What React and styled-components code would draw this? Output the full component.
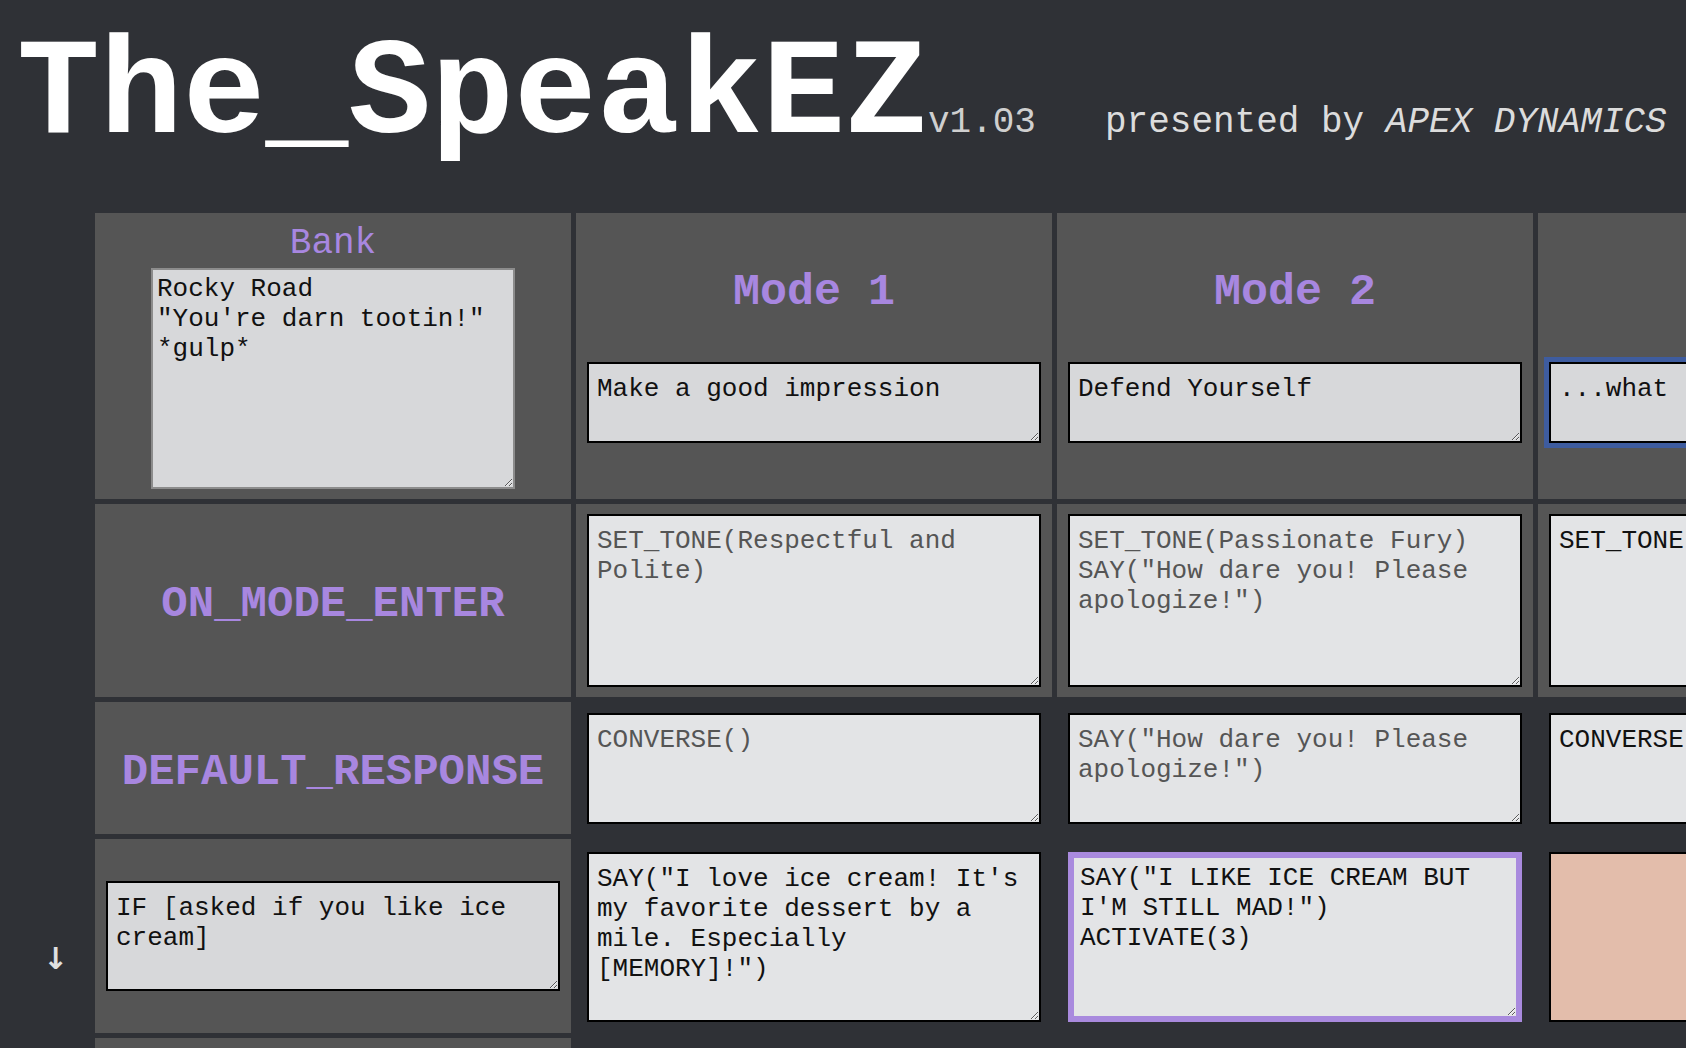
import React from 'react';
import styled, { createGlobalStyle } from 'styled-components';

const MONO = '"Liberation Mono", "Courier New", monospace';
const PURPLE = '#a887e0';

const GlobalStyle = createGlobalStyle`
  html, body {
    margin: 0;
    padding: 0;
    overflow: hidden;
    background-color: #2f3136;
    font-family: ${MONO};
  }
  * {
    box-sizing: border-box;
  }
`;

const Page = styled.div`
  width: 1686px;
  height: 1048px;
  overflow: hidden;
  background-color: #2f3136;
`;

const Header = styled.header`
  display: flex;
  align-items: baseline;
  height: 213px;
  padding: 26px 0 0 17px;
  white-space: nowrap;
`;

const Title = styled.h1`
  margin: 0;
  font-family: ${MONO};
  font-size: 138px;
  line-height: 138px;
  font-weight: bold;
  color: #ffffff;
`;

const Version = styled.span`
  font-size: 36px;
  color: #cfcfcf;
`;

const Presenter = styled.span`
  margin-left: 69px;
  font-size: 36px;
  color: #dcdcdc;
`;

const Company = styled.i`
  font-style: italic;
`;

const Board = styled.div`
  display: grid;
  grid-template-columns: 90px repeat(4, 476px);
  grid-template-rows: 286px 193px 132px 194px 200px;
  gap: 5px;
`;

const Gutter = styled.div`
  display: flex;
  align-items: center;
  justify-content: center;
  padding: ${(p) => (p.$drop ? `${p.$drop}px 0 0 21px` : '0')};
  color: #e0e0e0;
  font-family: "DejaVu Sans", sans-serif;
  font-size: 30px;
  font-weight: bold;
`;

const Cell = styled.div`
  display: flex;
  align-items: center;
  justify-content: center;
  padding: ${(p) => p.$pad || '0 11px'};
  background-color: ${(p) => (p.$shade ? '#555555' : 'transparent')};
`;

const ColumnHead = styled.div`
  display: flex;
  flex-direction: column;
  align-items: center;
  padding: ${(p) => (p.$bank ? '10px 11px 0' : '54px 11px 0')};
  background-color: #555555;
`;

const BankLabel = styled.h3`
  margin: 0 0 4px;
  font-family: ${MONO};
  font-size: 36px;
  font-weight: normal;
  line-height: normal;
  color: ${PURPLE};
`;

const ModeLabel = styled.h2`
  margin: 0 0 44px;
  font-family: ${MONO};
  font-size: 45px;
  font-weight: bold;
  line-height: normal;
  color: ${PURPLE};
  white-space: pre;
`;

const RowLabel = styled.h2`
  margin: 0;
  font-family: ${MONO};
  font-size: 44px;
  font-weight: bold;
  color: ${PURPLE};
`;

const frames = {
  gray: '2px solid #8c8c8c',
  black: '2px solid #000000',
  purple: '6px solid #a98ade',
};

const fills = {
  name: '#d7d8da',
  code: '#e3e4e6',
  peach: '#e3bdab',
};

const Field = styled.textarea`
  display: block;
  flex: none;
  width: ${(p) => p.$w || 454}px;
  height: ${(p) => p.$h}px;
  margin: 0;
  padding: ${(p) => (p.$frame === 'purple' ? '5px 6px' : p.$tight ? '4px 4px' : '10px 8px')};
  border: ${(p) => frames[p.$frame || 'black']};
  border-radius: 0;
  background-color: ${(p) => fills[p.$fill || 'code']};
  color: ${(p) => (p.$dim ? '#555555' : '#111111')};
  font-family: ${MONO};
  font-size: 26px;
  line-height: normal;
  outline: ${(p) => (p.$focus ? '5px solid #3e5c9f' : 'none')};
  outline-offset: 0;
  overflow: hidden;
`;

const modes = [
  {
    name: 'Mode 1',
    title: 'Make a good impression',
    enter: { text: 'SET_TONE(Respectful and Polite)', dim: true },
    fallback: { text: 'CONVERSE()', dim: true },
    rule: { text: 'SAY("I love ice cream! It\'s my favorite dessert by a mile. Especially [MEMORY]!")' },
  },
  {
    name: 'Mode 2',
    title: 'Defend Yourself',
    enter: { text: 'SET_TONE(Passionate Fury)\nSAY("How dare you! Please apologize!")', dim: true },
    fallback: { text: 'SAY("How dare you! Please apologize!")', dim: true },
    rule: { text: 'SAY("I LIKE ICE CREAM BUT I\'M STILL MAD!")\nACTIVATE(3)', frame: 'purple' },
  },
  {
    name: 'Mode 3',
    title: '...what',
    focus: true,
    enter: { text: 'SET_TONE(Confused)' },
    fallback: { text: 'CONVERSE()' },
    rule: { text: '', fill: 'peach' },
  },
];

const App = () => (
  <Page>
    <GlobalStyle />
    <Header>
      <Title>The_SpeakEZ</Title>
      <Version>v1.03</Version>
      <Presenter>
        presented by <Company>APEX DYNAMICS</Company>
      </Presenter>
    </Header>

    <Board>
      {/* column headers */}
      <Gutter />
      <ColumnHead $bank>
        <BankLabel>Bank</BankLabel>
        <Field
          $w={364}
          $h={221}
          $frame="gray"
          $fill="name"
          $tight
          defaultValue={'Rocky Road\n"You\'re darn tootin!"\n*gulp*'}
        />
      </ColumnHead>
      {modes.map((m) => (
        <ColumnHead key={m.name}>
          <ModeLabel>{m.name}</ModeLabel>
          <Field $h={81} $fill="name" $focus={m.focus} defaultValue={m.title} />
        </ColumnHead>
      ))}

      {/* on enter */}
      <Gutter />
      <Cell $shade $pad="7px 11px 0">
        <RowLabel>ON_MODE_ENTER</RowLabel>
      </Cell>
      {modes.map((m) => (
        <Cell key={m.name} $shade>
          <Field $h={173} $dim={m.enter.dim} defaultValue={m.enter.text} />
        </Cell>
      ))}

      {/* default response */}
      <Gutter />
      <Cell $shade $pad="7px 11px 0">
        <RowLabel>DEFAULT_RESPONSE</RowLabel>
      </Cell>
      {modes.map((m) => (
        <Cell key={m.name} $pad="1px 11px 0">
          <Field $h={111} $dim={m.fallback.dim} defaultValue={m.fallback.text} />
        </Cell>
      ))}

      {/* conditions */}
      <Gutter $drop={44}>↓</Gutter>
      <Cell $shade>
        <Field $h={110} $fill="name" defaultValue="IF [asked if you like ice cream]" />
      </Cell>
      {modes.map((m) => (
        <Cell key={m.name} $pad="2px 11px 0">
          <Field
            $h={170}
            $frame={m.rule.frame}
            $fill={m.rule.fill}
            defaultValue={m.rule.text}
          />
        </Cell>
      ))}

      <Gutter />
      <Cell $shade />
    </Board>
  </Page>
);

export default App;
